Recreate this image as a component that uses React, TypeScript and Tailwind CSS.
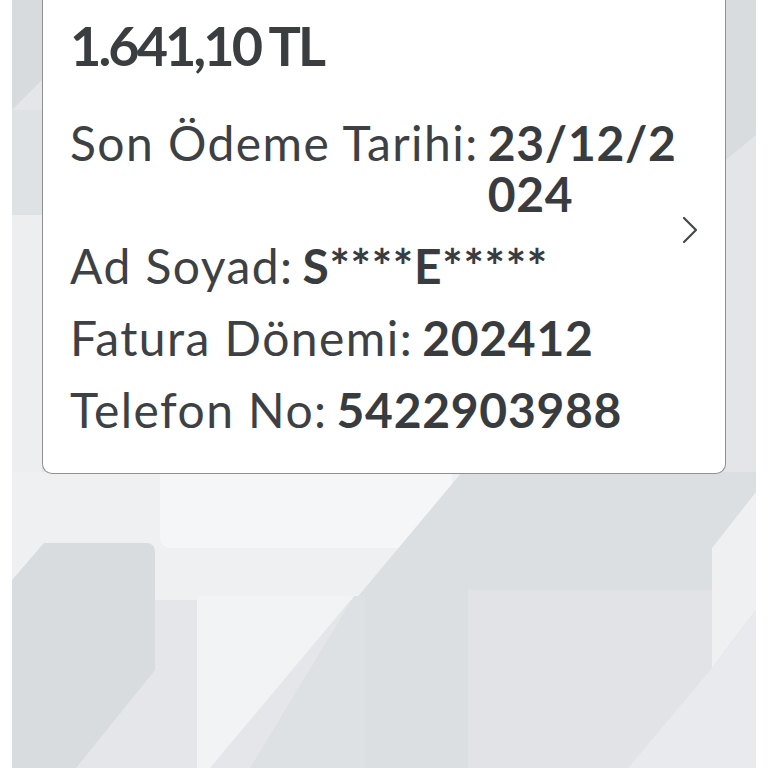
import React from 'react';

type InfoRow = { label: string; value: string };

const ROWS: InfoRow[] = [
  { label: 'Son Ödeme Tarihi:', value: '23/12/2024' },
  { label: 'Ad Soyad:', value: 'S****E*****' },
  { label: 'Fatura Dönemi:', value: '202412' },
  { label: 'Telefon No:', value: '5422903988' },
];

const FONT = { fontFamily: 'Lato, "Noto Sans", sans-serif' };

function Backdrop() {
  return (
    <svg
      className="absolute inset-0 h-full w-full"
      viewBox="12 0 744 768"
      preserveAspectRatio="none"
      aria-hidden="true"
    >
      <rect x="12" y="0" width="744" height="768" fill="#e4e6e9" />
      {/* top strips beside the card */}
      <polygon points="12,0 42,0 42,80 12,110" fill="#d8dbde" />
      <rect x="12" y="110" width="30" height="105" fill="#dfe2e4" />
      <rect x="12" y="215" width="30" height="260" fill="#eceef0" />
      <polygon points="726,0 756,0 756,135 726,160" fill="#d9dcdf" />
      <polygon points="726,160 756,135 756,500 726,500" fill="#e3e5e8" />
      {/* bottom field */}
      <polygon points="12,472 470,472 400,600 12,600" fill="#eef0f2" />
      <rect x="160" y="440" width="292" height="108" rx="10" fill="#f5f6f8" />
      <polygon points="462,472 756,472 756,768 560,768 300,768 355,600" fill="#dcdfe2" />
      <polygon points="468,590 715,590 715,768 468,768" fill="#e1e3e6" />
      <polygon points="756,492 712,548 712,668 756,610" fill="#eef0f2" />
      <polygon points="712,668 756,610 756,768 628,768" fill="#e8eaed" />
      <polygon points="197,596 354,596 210,768 197,768" fill="#f2f3f5" />
      <polygon points="354,596 365,596 365,768 250,768" fill="#dee1e4" />
      <path d="M44 543 H146 Q155 543 155 552 V670 L76 768 H12 V580 Z" fill="#d9dcdf" />
    </svg>
  );
}

function Chevron() {
  return (
    <svg width="18" height="30" viewBox="0 0 18 30" fill="none" aria-hidden="true">
      <path d="M3 3 L15 15 L3 27" stroke="#45484b" strokeWidth="2.2" strokeLinecap="round" strokeLinejoin="round" />
    </svg>
  );
}

export default function App() {
  return (
    <div className="h-[768px] w-[768px] overflow-hidden bg-white px-[12px]" style={FONT}>
      <div className="relative h-full">
        <Backdrop />
        <div className="relative px-[30px]">
          <div className="flex rounded-b-[10px] border border-t-0 border-[#8e9093] bg-white pb-[38px] pl-[27px] pr-[26px] pt-[16px]">
            <div className="min-w-0 flex-1">
              <div className="text-[54px] font-bold leading-[60px] tracking-[-0.054em] text-[#3b3e41]">1.641,10 TL</div>
              <div className="mt-[41px] flex flex-col gap-[21px]">
                {ROWS.map((row) => (
                  <div key={row.label} className="flex text-[48px] leading-[51px] text-[#3e4144]">
                    <span className="shrink-0 tracking-[0.03em]">{row.label}</span>
                    <span className="ml-[9px] min-w-0 flex-1 break-all font-bold tracking-[0.015em] text-[#393c3f]">
                      {row.value}
                    </span>
                  </div>
                ))}
              </div>
            </div>
            <div className="flex w-[18px] shrink-0 items-center pt-[8px]">
              <Chevron />
            </div>
          </div>
        </div>
      </div>
    </div>
  );
}
